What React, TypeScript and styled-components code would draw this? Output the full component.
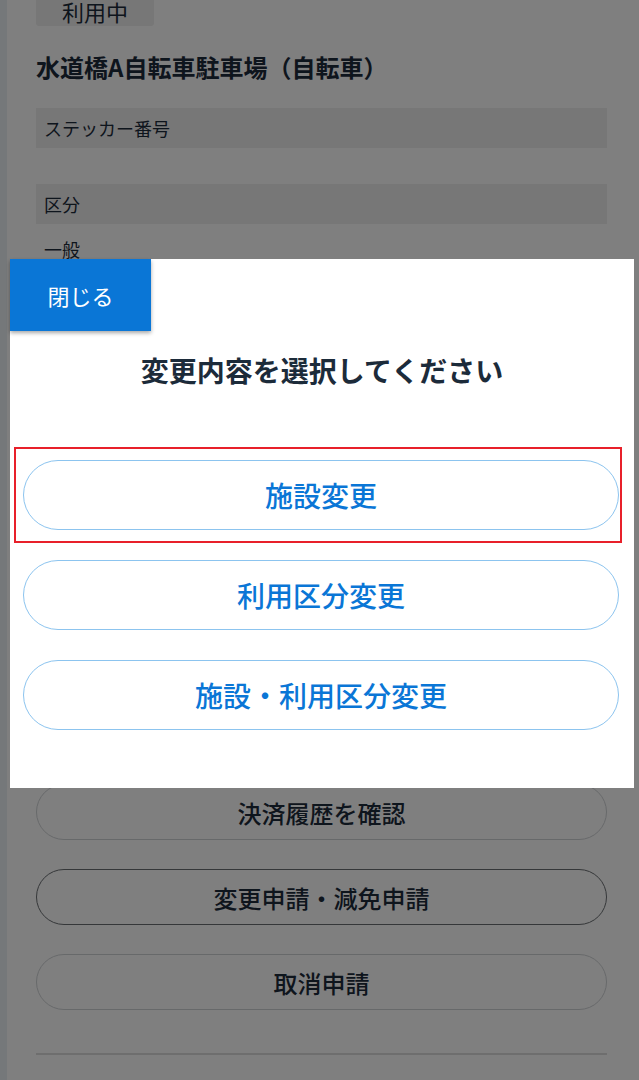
import React from "react";
import styled, { createGlobalStyle, css } from "styled-components";

const GlobalStyle = createGlobalStyle`
  html, body {
    margin: 0;
    padding: 0;
    background: #ebf0f5;
    font-family: "Noto Sans CJK JP", "Noto Sans", sans-serif;
    color: #1c2b3a;
    overflow: hidden;
  }
  * { box-sizing: border-box; }
`;

const Page = styled.div`
  padding-left: 7px;
  min-height: 1080px;
  background: #ebf0f5;
`;

const Panel = styled.main`
  background: #ffffff;
  min-height: 1080px;
  padding: 0 32px 0 29px;
  display: flex;
  flex-direction: column;
`;

const StatusBadge = styled.span`
  align-self: flex-start;
  background: #eeeeee;
  border-radius: 0 0 3px 3px;
  height: 26px;
  padding: 0 26px;
  font-size: 22px;
  line-height: 22px;
  color: #1c2b3a;
`;

const FacilityTitle = styled.h1`
  margin: 24px 0 0;
  font-size: 24px;
  line-height: 34px;
  font-weight: 700;
  color: #1c2b3a;
`;

const InfoList = styled.dl`
  margin: 24px 0 0;
  display: flex;
  flex-direction: column;
`;

const InfoLabel = styled.dt`
  background: #eeeeee;
  height: 40px;
  line-height: 40px;
  padding: 0 8px;
  font-size: 18px;
  color: #1c2b3a;
`;

const InfoValue = styled.dd`
  margin: 0;
  min-height: 36px;
  padding: 8px 8px 0;
  font-size: 18px;
  line-height: 34px;
  color: #1c2b3a;
`;

const ActionList = styled.div`
  margin-top: 518px;
  display: flex;
  flex-direction: column;
  gap: 29px;
`;

const ActionButton = styled.button<{ $active?: boolean }>`
  height: 56px;
  border-radius: 28px;
  background: #ffffff;
  border: 1px solid ${(p) => (p.$active ? "#6a6e72" : "#cfd2d5")};
  font-family: inherit;
  font-size: 24px;
  font-weight: 500;
  color: #1c2b3a;
  padding: 0;
`;

const Divider = styled.hr`
  margin: 43px 0 0;
  border: none;
  border-top: 2px solid #dcdcdc;
`;

const Overlay = styled.div`
  position: fixed;
  inset: 0;
  background: rgba(0, 0, 0, 0.5);
`;

const Modal = styled.div`
  position: fixed;
  left: 10px;
  top: 259px;
  width: 624px;
  height: 529px;
  background: #ffffff;
  display: flex;
  flex-direction: column;
`;

const CloseButton = styled.button`
  align-self: flex-start;
  width: 141px;
  height: 72px;
  background: #0a76d6;
  color: #ffffff;
  border: none;
  font-family: inherit;
  font-size: 22px;
  font-weight: 400;
  box-shadow: 0 2px 4px rgba(0, 0, 0, 0.35);
  padding: 0;
`;

const ModalTitle = styled.h2`
  margin: 19px 0 0;
  text-align: center;
  font-size: 28px;
  line-height: 40px;
  font-weight: 700;
  color: #1c2b3a;
`;

const OptionList = styled.div`
  margin-top: 70px;
  padding: 0 15px 0 13px;
  display: flex;
  flex-direction: column;
  gap: 30px;
`;

const OptionButton = styled.button<{ $highlight?: boolean }>`
  position: relative;
  height: 70px;
  border-radius: 35px;
  background: #ffffff;
  border: 1px solid #8cc4ef;
  font-family: inherit;
  font-size: 28px;
  font-weight: 500;
  color: #0a76d6;
  padding: 0;
  ${(p) =>
    p.$highlight &&
    css`
      &::after {
        content: "";
        position: absolute;
        top: -14px;
        bottom: -14px;
        left: -10px;
        right: -4px;
        border: 2.5px solid #e8202a;
        pointer-events: none;
      }
    `}
`;

const options = ["施設変更", "利用区分変更", "施設・利用区分変更"];

export default function App() {
  return (
    <>
      <GlobalStyle />
      <Page>
        <Panel>
          <StatusBadge>利用中</StatusBadge>
          <FacilityTitle>水道橋A自転車駐車場（自転車）</FacilityTitle>
          <InfoList>
            <InfoLabel>ステッカー番号</InfoLabel>
            <InfoValue></InfoValue>
            <InfoLabel>区分</InfoLabel>
            <InfoValue>一般</InfoValue>
          </InfoList>
          <ActionList>
            <ActionButton>決済履歴を確認</ActionButton>
            <ActionButton $active>変更申請・減免申請</ActionButton>
            <ActionButton>取消申請</ActionButton>
          </ActionList>
          <Divider />
        </Panel>
      </Page>
      <Overlay />
      <Modal>
        <CloseButton>閉じる</CloseButton>
        <ModalTitle>変更内容を選択してください</ModalTitle>
        <OptionList>
          {options.map((o, i) => (
            <OptionButton key={o} $highlight={i === 0}>
              {o}
            </OptionButton>
          ))}
        </OptionList>
      </Modal>
    </>
  );
}
